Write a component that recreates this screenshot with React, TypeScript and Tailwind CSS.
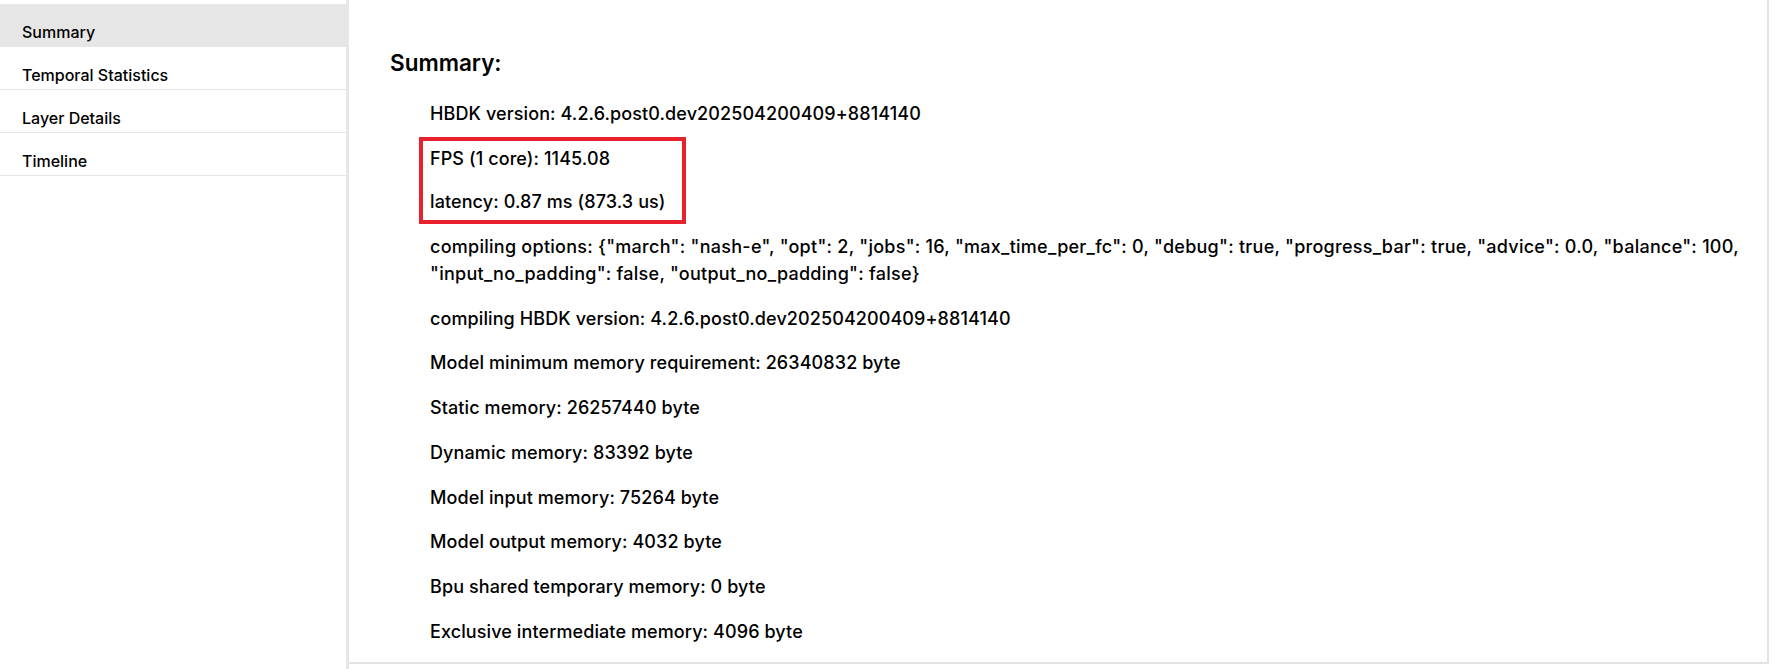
import React from 'react';

const navItems = ['Summary', 'Temporal Statistics', 'Layer Details', 'Timeline'];

const summaryLines = [
  'compiling HBDK version: 4.2.6.post0.dev202504200409+8814140',
  'Model minimum memory requirement: 26340832 byte',
  'Static memory: 26257440 byte',
  'Dynamic memory: 83392 byte',
  'Model input memory: 75264 byte',
  'Model output memory: 4032 byte',
  'Bpu shared temporary memory: 0 byte',
  'Exclusive intermediate memory: 4096 byte',
];

const App: React.FC = () => {
  return (
    <div className="flex h-[669px] w-[1786px] overflow-hidden bg-white text-black font-['Inter','Liberation_Sans',sans-serif]">
      {/* Sidebar */}
      <aside className="w-[349px] shrink-0 border-r-[3px] border-[#e6e6e6] pt-[4px]">
        {navItems.map((item, i) => (
          <div
            key={item}
            className={`h-[43px] border-b border-[#e6e6e6] pl-[22px] pt-[19px] text-[16px] leading-[18px] font-medium ${
              i === 0 ? 'bg-[#e6e6e6]' : 'bg-white'
            }`}
          >
            {item}
          </div>
        ))}
      </aside>

      {/* Main content */}
      <main className="h-[664px] w-[1420px] shrink-0 border-r-2 border-b-2 border-[#e3e3e3] pl-[41px] pr-[4px] pt-[49px]">
        <h2 className="text-[22.5px] leading-[27px] font-semibold">Summary:</h2>

        <div className="mt-[24px] flex flex-col pl-[40px] text-[18px] leading-[27.5px] tracking-[0.1px] font-medium">
          <p>HBDK version: 4.2.6.post0.dev202504200409+8814140</p>

          {/* Highlighted metrics */}
          <div className="-ml-[11px] my-[9px] flex w-[267px] flex-col gap-[16px] border-4 border-[#e8212c] py-[4px] pl-[7px]">
            <p>FPS (1 core): 1145.08</p>
            <p>latency: 0.87 ms (873.3 us)</p>
          </div>

          <p className="tracking-[0.26px]">
            compiling options: {'{'}"march": "nash-e", "opt": 2, "jobs": 16, "max_time_per_fc": 0, "debug": true,
            "progress_bar": true, "advice": 0.0, "balance": 100, "input_no_padding": false, "output_no_padding": false{'}'}
          </p>

          <div className="mt-[17px] flex flex-col gap-[17.3px]">
            {summaryLines.map((line) => (
              <p key={line}>{line}</p>
            ))}
          </div>
        </div>
      </main>
    </div>
  );
};

export default App;
